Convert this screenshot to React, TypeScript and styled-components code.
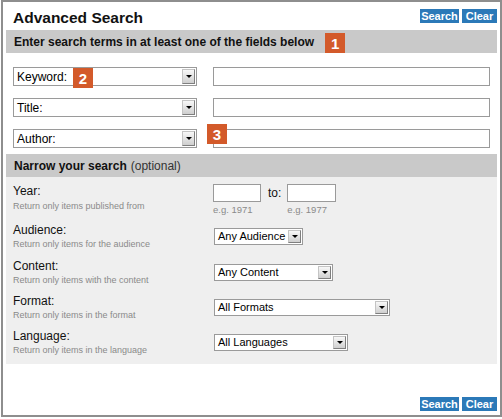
import React from 'react';
import styled, { createGlobalStyle } from 'styled-components';

const Global = createGlobalStyle`
  html, body { margin: 0; padding: 0; background: #fff; }
  body { font-family: "Liberation Sans", Arial, sans-serif; color: #111; }
  * { box-sizing: border-box; }
`;

const Panel = styled.div`
  width: 501px;
  height: 417px;
  margin-left: 1px;
  border: 2px solid #8e8e8e;
  padding: 0 3px;
  display: flex;
  flex-direction: column;
  background: #fff;
`;

const TitleRow = styled.div`
  display: flex;
  align-items: flex-start;
  justify-content: space-between;
  height: 28px;
  padding: 7px 0 0 7px;
`;

const Title = styled.h1`
  margin: 0;
  font-size: 15.5px;
  line-height: 18px;
  font-weight: bold;
  color: #111;
`;

const ButtonGroup = styled.div`
  display: flex;
  gap: 3px;
`;

const ActionButton = styled.button<{ $w: number }>`
  width: ${(p) => p.$w}px;
  height: 14px;
  padding: 0;
  border: 0;
  background: #2b79b8;
  color: #fff;
  font: bold 11px/14px "Liberation Sans", Arial, sans-serif;
  text-align: center;
  cursor: pointer;
`;

const SectionBar = styled.div`
  display: flex;
  align-items: center;
  height: 23px;
  padding-left: 8px;
  background: #c9c9c9;
  font-size: 12px;
  font-weight: bold;
  color: #111;
`;

const Optional = styled.span`
  font-weight: normal;
  color: #333;
  margin-left: 4px;
`;

const Badge = styled.span`
  display: inline-flex;
  align-items: center;
  justify-content: center;
  width: 20px;
  height: 20px;
  background: #d35a2a;
  color: #fff;
  font: bold 15px/1 "Liberation Sans", Arial, sans-serif;
`;

const BarBadge = styled(Badge)`
  align-self: flex-end;
  margin-left: 11px;
`;

const FloatingBadge = styled(Badge)<{ $left: number; $top: number }>`
  position: absolute;
  left: ${(p) => p.$left}px;
  top: ${(p) => p.$top}px;
`;

const SearchFields = styled.div`
  display: flex;
  flex-direction: column;
  gap: 12px;
  padding: 14px 0 6px 7px;
`;

const FieldRow = styled.div`
  position: relative;
  display: flex;
  gap: 16px;
  height: 19px;
`;

const SelectBox = styled.div<{ $w: number; $h: number; $fs: number }>`
  display: flex;
  align-items: stretch;
  width: ${(p) => p.$w}px;
  height: ${(p) => p.$h}px;
  border: 1px solid #9a9a9a;
  background: #fff;
  font-size: ${(p) => p.$fs}px;
  color: #000;
`;

const SelectText = styled.span`
  flex: 1;
  display: flex;
  align-items: center;
  padding-left: 3px;
  overflow: hidden;
  white-space: nowrap;
`;

const ArrowBox = styled.span`
  width: 13px;
  margin: 1px;
  display: flex;
  align-items: center;
  justify-content: center;
  background: linear-gradient(#f8f8f8, #cfcfcf);
  border: 1px solid;
  border-color: #c4c4c4 #7f7f7f #7f7f7f #c4c4c4;
`;

const Triangle = styled.span`
  width: 0;
  height: 0;
  border-left: 3px solid transparent;
  border-right: 3px solid transparent;
  border-top: 3px solid #000;
`;

const TextInput = styled.input<{ $w: number; $h: number }>`
  width: ${(p) => p.$w}px;
  height: ${(p) => p.$h}px;
  border: 1px solid #9a9a9a;
  padding: 0;
  margin: 0;
  background: #fff;
  outline: none;
`;

const NarrowBody = styled.div`
  height: 187px;
  background: #efefef;
  padding: 7px 0 0 7px;
  display: flex;
  flex-direction: column;
`;

const OptionRow = styled.div<{ $h: number }>`
  display: grid;
  grid-template-columns: 200px 1fr;
  height: ${(p) => p.$h}px;
`;

const LabelBlock = styled.div`
  display: flex;
  flex-direction: column;
`;

const OptionLabel = styled.span`
  font-size: 12px;
  line-height: 14px;
  color: #111;
`;

const OptionHint = styled.span`
  margin-top: 2.5px;
  font-size: 9px;
  line-height: 11px;
  color: #8a8a8a;
`;

const Control = styled.div<{ $pad: number; $shift?: number }>`
  padding-top: ${(p) => p.$pad}px;
  padding-left: ${(p) => p.$shift || 0}px;
`;

const YearControls = styled.div`
  display: flex;
  align-items: flex-start;
`;

const YearField = styled.div`
  display: flex;
  flex-direction: column;
`;

const YearHint = styled.span`
  margin-top: 2px;
  font-size: 9.5px;
  line-height: 11px;
  color: #8a8a8a;
`;

const ToLabel = styled.span`
  margin: 0 6px 0 7px;
  font-size: 12px;
  line-height: 18px;
  color: #111;
`;

const Footer = styled.div`
  flex: 1;
  display: flex;
  justify-content: flex-end;
  align-items: flex-end;
  padding-bottom: 4px;
`;

const Select = ({ label, w, h, fs }: { label: string; w: number; h: number; fs: number }) => (
  <SelectBox $w={w} $h={h} $fs={fs}>
    <SelectText>{label}</SelectText>
    <ArrowBox>
      <Triangle />
    </ArrowBox>
  </SelectBox>
);

const Buttons = () => (
  <ButtonGroup>
    <ActionButton $w={39}>Search</ActionButton>
    <ActionButton $w={35}>Clear</ActionButton>
  </ButtonGroup>
);

const options = [
  { label: 'Audience:', hint: 'Return only items for the audience', value: 'Any Audience', w: 89, h: 37 },
  { label: 'Content:', hint: 'Return only items with the content', value: 'Any Content', w: 119, h: 36 },
  { label: 'Format:', hint: 'Return only items in the format', value: 'All Formats', w: 176, h: 36 },
  { label: 'Language:', hint: 'Return only items in the language', value: 'All Languages', w: 134, h: 36 },
];

export default function App() {
  return (
    <>
      <Global />
      <Panel>
        <TitleRow>
          <Title>Advanced Search</Title>
          <Buttons />
        </TitleRow>
        <SectionBar>
          Enter search terms in at least one of the fields below
          <BarBadge>1</BarBadge>
        </SectionBar>
        <SearchFields>
          <FieldRow>
            <Select label="Keyword:" w={184} h={19} fs={12} />
            <TextInput $w={277} $h={19} />
            <FloatingBadge $left={60} $top={1}>2</FloatingBadge>
          </FieldRow>
          <FieldRow>
            <Select label="Title:" w={184} h={19} fs={12} />
            <TextInput $w={277} $h={19} />
          </FieldRow>
          <FieldRow>
            <Select label="Author:" w={184} h={19} fs={12} />
            <TextInput $w={277} $h={19} />
            <FloatingBadge $left={194} $top={-5}>3</FloatingBadge>
          </FieldRow>
        </SearchFields>
        <SectionBar>
          Narrow your search<Optional>(optional)</Optional>
        </SectionBar>
        <NarrowBody>
          <OptionRow $h={40}>
            <LabelBlock>
              <OptionLabel>Year:</OptionLabel>
              <OptionHint>Return only items published from</OptionHint>
            </LabelBlock>
            <Control $pad={0}>
              <YearControls>
                <YearField>
                  <TextInput $w={48} $h={18} />
                  <YearHint>e.g. 1971</YearHint>
                </YearField>
                <ToLabel>to:</ToLabel>
                <YearField>
                  <TextInput $w={49} $h={18} />
                  <YearHint>e.g. 1977</YearHint>
                </YearField>
              </YearControls>
            </Control>
          </OptionRow>
          {options.map((o) => (
            <OptionRow key={o.label} $h={o.h}>
              <LabelBlock>
                <OptionLabel>{o.label}</OptionLabel>
                <OptionHint>{o.hint}</OptionHint>
              </LabelBlock>
              <Control $pad={5} $shift={1}>
                <Select label={o.value} w={o.w} h={17} fs={11} />
              </Control>
            </OptionRow>
          ))}
        </NarrowBody>
        <Footer>
          <Buttons />
        </Footer>
      </Panel>
    </>
  );
}
